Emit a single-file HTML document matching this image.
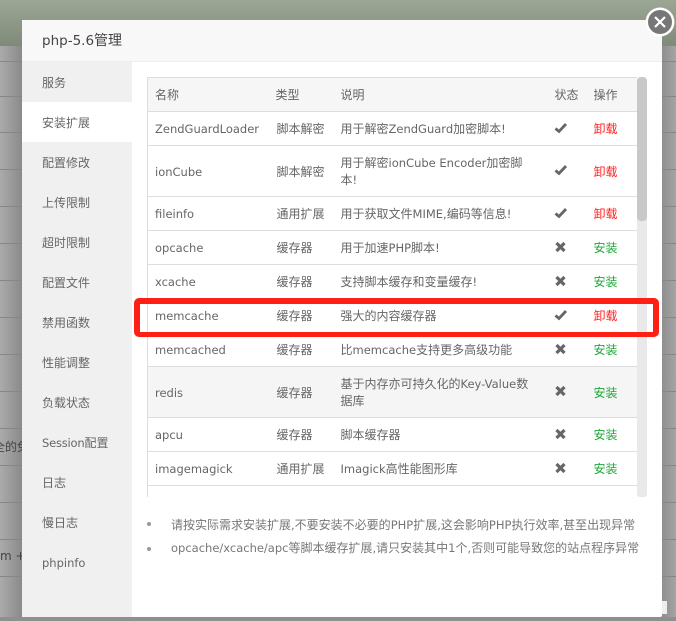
<!DOCTYPE html>
<html><head><meta charset="utf-8">
<style>
html,body{margin:0;padding:0}
body{width:676px;height:621px;position:relative;overflow:hidden;background:#a0a0a0;font-family:"DejaVu Sans","Noto Sans CJK SC",sans-serif;font-size:12px;color:#666}
.abs{position:absolute}
i{font-style:normal;font-size:11.5px}
#bgl{left:0;top:46px;width:22px;height:575px;background:linear-gradient(90deg,#ababab,#8a8a8a)}
#bgr{left:662px;top:46px;width:14px;height:575px;background:linear-gradient(90deg,#8f8f8f,#a4a4a4)}
#bgb{left:0;top:617px;width:676px;height:4px;background:#8f8f8f}
#top{left:0;top:0;width:676px;height:46px;background:linear-gradient(180deg,#9ba794,#7f8b78)}
.ln{position:absolute;left:0;width:676px;height:1px;background:#868686}
#modal{left:22px;top:20px;width:640px;height:597px;background:#fff;border-radius:2px}
#title{left:0;top:0;width:640px;height:41px;background:#f8f8f8;border-bottom:1px solid #eee;font-size:14px;line-height:43px;color:#444;text-indent:20px}
#title i{font-size:13.5px}
#side{left:0;top:42px;width:110px;height:555px;background:#f0f0f0}
#side div{height:40px;line-height:42px;padding-left:20px;font-size:12px;color:#666}
#side div.on{background:#fff}
#wrap{left:147px;top:77px;width:490px;height:420px;overflow:hidden}
table{border-collapse:collapse;table-layout:fixed;width:490px;border-left:1px solid #ddd}
td,th{border-bottom:1px solid #ddd;padding:2px 0 0 7px;font-weight:normal;text-align:left;color:#666;font-size:12px;line-height:17px;box-sizing:border-box;vertical-align:middle}
td.d,th.d{padding-left:8px}
td.d{padding-right:15px}
td.t{padding-left:8px}
th{background:#f6f6f6;border-top:1px solid #ddd;color:#666;font-size:12px}
tr.h td{background:#f5f5f5}
.r{color:#ff2020;font-size:12px}
.g{color:#20a53a;font-size:12px}
svg{display:block}
td svg{position:relative;top:-2px;margin-left:-1px}
#sb{left:637px;top:77px;width:10px;height:420px;background:#e9e9e9;border-radius:4px 4px 3px 3px}
#th{left:637px;top:77px;width:10px;height:144px;background:#c8c8c8;border-radius:4px}
#box{left:134px;top:298px;width:525px;height:39px;box-sizing:border-box;border:6px solid #ff2015;border-bottom-width:5px;border-radius:5px}
.note{position:absolute;left:171px;font-size:12px;color:#777;white-space:nowrap;line-height:17px}
.dot{position:absolute;left:147px;width:4px;height:4px;border-radius:50%;background:#999}
#close{left:645px;top:7px;width:30px;height:30px}
.bt{position:absolute;font-size:12px;color:#444;white-space:nowrap}
</style></head>
<body>
<div class="abs" id="bgl"></div>
<div class="abs" id="bgr"></div>
<div class="abs" id="bgb"></div>
<div class="ln" style="top:61px"></div><div class="ln" style="top:96px"></div><div class="ln" style="top:132px"></div><div class="ln" style="top:169px"></div><div class="ln" style="top:206px"></div><div class="ln" style="top:243px"></div><div class="ln" style="top:280px"></div><div class="ln" style="top:317px"></div><div class="ln" style="top:354px"></div><div class="ln" style="top:391px"></div><div class="ln" style="top:428px"></div><div class="ln" style="top:465px"></div><div class="ln" style="top:502px"></div><div class="ln" style="top:539px"></div><div class="ln" style="top:576px"></div>
<div class="abs" id="top"></div>
<div class="bt" style="left:-7px;top:438px">全的免</div>
<div class="bt" style="left:0;top:549px">m +</div>
<div class="abs" style="left:662px;top:601px;width:5px;height:13px;background:#eee"></div>

<div class="abs" id="modal">
<div class="abs" id="title"><i>php-5.6</i>管理</div>
<div class="abs" id="side">
<div>服务</div><div class="on">安装扩展</div><div>配置修改</div><div>上传限制</div><div>超时限制</div><div>配置文件</div><div>禁用函数</div><div>性能调整</div><div>负载状态</div><div><i style="letter-spacing:-.2px">Session</i>配置</div><div>日志</div><div>慢日志</div><div><i>phpinfo</i></div>
</div>
</div>

<div class="abs" id="wrap">
<table>
<colgroup><col style="width:121px"><col style="width:64px"><col style="width:215px"><col style="width:39px"><col style="width:51px"></colgroup>
<tr style="height:34px"><th>名称</th><th>类型</th><th class="d">说明</th><th>状态</th><th>操作</th></tr>
<tr style="height:34px"><td><i>ZendGuardLoader</i></td><td class="t">脚本解密</td><td class="d">用于解密<i>ZendGuard</i>加密脚本<i>!</i></td><td><svg width="14" height="12" viewBox="0 0 14 12"><path d="M1.5 6.5L5 9.5L12 2" fill="none" stroke="#666" stroke-width="2.8"/></svg></td><td class="r">卸载</td></tr>
<tr style="height:51px"><td><i>ionCube</i></td><td class="t">脚本解密</td><td class="d">用于解密<i>ionCube Encoder</i>加密脚本<i>!</i></td><td><svg width="14" height="12" viewBox="0 0 14 12"><path d="M1.5 6.5L5 9.5L12 2" fill="none" stroke="#666" stroke-width="2.8"/></svg></td><td class="r">卸载</td></tr>
<tr style="height:34px"><td><i>fileinfo</i></td><td class="t">通用扩展</td><td class="d">用于获取文件<i>MIME,</i>编码等信息<i>!</i></td><td><svg width="14" height="12" viewBox="0 0 14 12"><path d="M1.5 6.5L5 9.5L12 2" fill="none" stroke="#666" stroke-width="2.8"/></svg></td><td class="r">卸载</td></tr>
<tr style="height:34px"><td><i>opcache</i></td><td class="t">缓存器</td><td class="d">用于加速<i>PHP</i>脚本<i>!</i></td><td><svg width="14" height="12" viewBox="0 0 14 12"><path d="M2.5 2L10.5 10M10.5 2L2.5 10" fill="none" stroke="#666" stroke-width="3.2"/></svg></td><td class="g">安装</td></tr>
<tr style="height:34px"><td><i>xcache</i></td><td class="t">缓存器</td><td class="d">支持脚本缓存和变量缓存<i>!</i></td><td><svg width="14" height="12" viewBox="0 0 14 12"><path d="M2.5 2L10.5 10M10.5 2L2.5 10" fill="none" stroke="#666" stroke-width="3.2"/></svg></td><td class="g">安装</td></tr>
<tr style="height:34px"><td><i>memcache</i></td><td class="t">缓存器</td><td class="d">强大的内容缓存器</td><td><svg width="14" height="12" viewBox="0 0 14 12"><path d="M1.5 6.5L5 9.5L12 2" fill="none" stroke="#666" stroke-width="2.8"/></svg></td><td class="r">卸载</td></tr>
<tr style="height:34px"><td><i>memcached</i></td><td class="t">缓存器</td><td class="d">比<i>memcache</i>支持更多高级功能</td><td><svg width="14" height="12" viewBox="0 0 14 12"><path d="M2.5 2L10.5 10M10.5 2L2.5 10" fill="none" stroke="#666" stroke-width="3.2"/></svg></td><td class="g">安装</td></tr>
<tr class="h" style="height:51px"><td><i>redis</i></td><td class="t">缓存器</td><td class="d">基于内存亦可持久化的<i>Key-Value</i>数据库</td><td><svg width="14" height="12" viewBox="0 0 14 12"><path d="M2.5 2L10.5 10M10.5 2L2.5 10" fill="none" stroke="#666" stroke-width="3.2"/></svg></td><td class="g">安装</td></tr>
<tr style="height:34px"><td><i>apcu</i></td><td class="t">缓存器</td><td class="d">脚本缓存器</td><td><svg width="14" height="12" viewBox="0 0 14 12"><path d="M2.5 2L10.5 10M10.5 2L2.5 10" fill="none" stroke="#666" stroke-width="3.2"/></svg></td><td class="g">安装</td></tr>
<tr style="height:34px"><td><i>imagemagick</i></td><td class="t">通用扩展</td><td class="d"><i>Imagick</i>高性能图形库</td><td><svg width="14" height="12" viewBox="0 0 14 12"><path d="M2.5 2L10.5 10M10.5 2L2.5 10" fill="none" stroke="#666" stroke-width="3.2"/></svg></td><td class="g">安装</td></tr>
<tr style="height:34px"><td></td><td></td><td></td><td></td><td></td></tr>
</table>
</div>
<div class="abs" id="sb"></div>
<div class="abs" id="th"></div>

<div class="dot" style="top:522px"></div>
<div class="note" style="top:517px">请按实际需求安装扩展<i>,</i>不要安装不必要的<i>PHP</i>扩展<i>,</i>这会影响<i>PHP</i>执行效率<i>,</i>甚至出现异常</div>
<div class="dot" style="top:547px"></div>
<div class="note" style="top:540px"><i>opcache/xcache/apc</i>等脚本缓存扩展<i>,</i>请只安装其中<i>1</i>个<i>,</i>否则可能导致您的站点程序异常</div>

<div class="abs" id="box"></div>

<svg class="abs" id="close" viewBox="0 0 30 30"><circle cx="15" cy="15" r="14.5" fill="#fff"/><circle cx="15" cy="15" r="12" fill="#777"/><path d="M10 10L20 20M20 10L10 20" stroke="#fff" stroke-width="2.2" fill="none"/></svg>
</body></html>
